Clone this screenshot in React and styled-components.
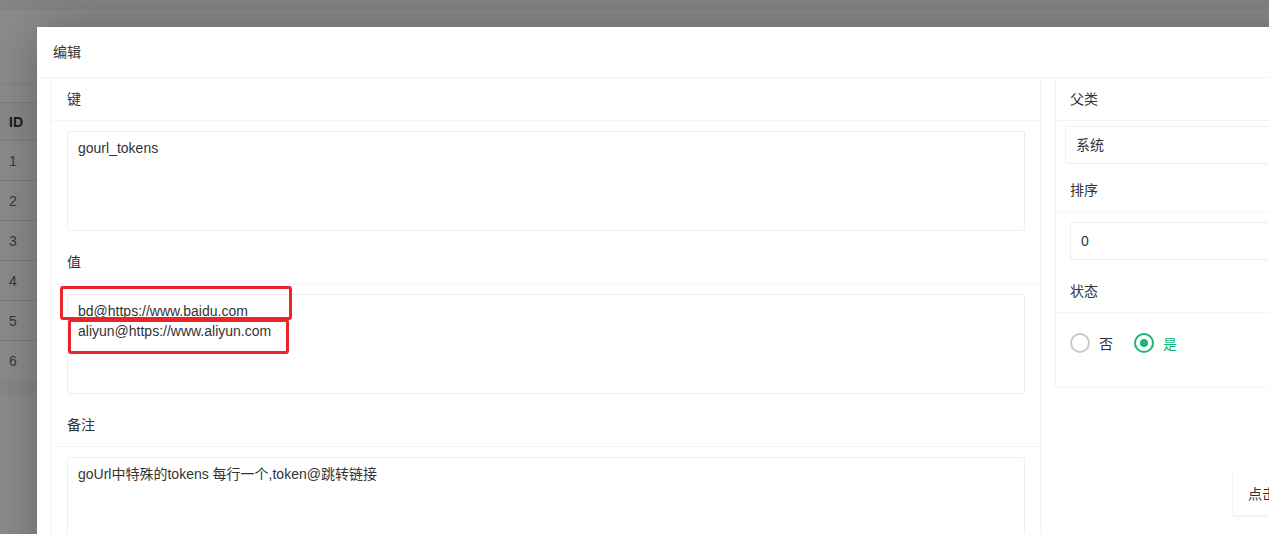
import styled, { createGlobalStyle } from 'styled-components'

const GlobalStyle = createGlobalStyle`
  html, body {
    margin: 0;
    padding: 0;
    overflow: hidden;
  }
  body {
    font-family: "Liberation Sans", "Noto Sans CJK SC", sans-serif;
    font-size: 14px;
    color: #333;
    background: #fff;
  }
`;

const Page = styled.div`
  position: relative;
  width: 1269px;
  height: 534px;
  overflow: hidden;
  background: #fff;
`;

const TopStrip = styled.div`
  height: 10px;
  background: #f2f2f2;
`;

const Toolbar = styled.div`
  height: 74px;
  border-bottom: 1px solid #eee;
`;

const Table = styled.table`
  margin-top: 17px;
  width: 100%;
  border-collapse: collapse;
  border-bottom: 15px solid #f8f8f8;
`;

const Th = styled.th`
  height: 37px;
  padding: 0 9px;
  text-align: left;
  font-weight: bold;
  color: #333;
  background: #fafafa;
  border-top: 1px solid #e6e6e6;
  border-bottom: 1px solid #e6e6e6;
`;

const Td = styled.td`
  height: 39px;
  padding: 0 9px;
  color: #666;
  border-bottom: 1px solid #e6e6e6;
`;

const Shade = styled.div`
  position: absolute;
  inset: 0;
  background: rgba(0, 0, 0, 0.45);
`;

const Modal = styled.div`
  position: absolute;
  left: 37px;
  top: 27px;
  width: 1400px;
  height: 620px;
  background: #fff;
  box-shadow: 1px 1px 50px rgba(0, 0, 0, 0.3);
`;

const ModalHeader = styled.div`
  height: 50px;
  line-height: 50px;
  padding: 0 16px;
  border-bottom: 1px solid #f0f0f0;
  color: #333;
`;

const ModalBody = styled.div`
  display: grid;
  grid-template-columns: 990px 1fr;
  gap: 14px;
  padding: 0 14px;
  align-items: start;
`;

const Column = styled.div`
  display: flex;
  flex-direction: column;
`;

const Card = styled.div`
  background: #fff;
  border-left: 1px solid #f3f3f3;
  border-right: 1px solid #f3f3f3;
  box-shadow: 0 1px 2px rgba(0, 0, 0, 0.05);
`;

const TipCard = styled(Card)`
  margin-top: 87px;
  margin-left: 177px;
  white-space: nowrap;
`;

const CardHeader = styled.div`
  height: 42px;
  line-height: 42px;
  padding: 0 ${p => p.$pad || 15}px;
  border-bottom: 1px solid #f4f4f4;
  color: #333;
`;

const CardBody = styled.div`
  padding: ${p => p.$pad || '10px 15px'};
`;

const Annotated = styled.div`
  position: relative;
`;

const TextArea = styled.textarea`
  display: block;
  width: 100%;
  height: 100px;
  box-sizing: border-box;
  padding: 6px 10px;
  border: 1px solid #eee;
  border-radius: 2px;
  font: inherit;
  line-height: 20px;
  color: #333;
  resize: none;
  outline: none;
  background: #fff;
`;

const Input = styled.div`
  height: 38px;
  line-height: 36px;
  box-sizing: border-box;
  padding: 0 10px;
  border: 1px solid #eee;
  border-radius: 2px;
  color: #333;
`;

const RedMark = styled.div`
  position: absolute;
  box-sizing: border-box;
  border: 3px solid #e8262a;
  border-radius: 3px;
  pointer-events: none;
`;

const RadioGroup = styled.div`
  display: flex;
  align-items: center;
  height: 28px;
  margin-top: 6px;
`;

const Radio = styled.label`
  display: flex;
  align-items: center;
  gap: 9px;
  margin-right: 21px;
  color: ${p => (p.$checked ? '#16b777' : '#333')};
`;

const RadioIcon = styled.span`
  position: relative;
  width: 20px;
  height: 20px;
  box-sizing: border-box;
  border-radius: 50%;
  border: 2px solid ${p => (p.$checked ? '#16b777' : '#c9c9c9')};
  &::after {
    content: '';
    display: ${p => (p.$checked ? 'block' : 'none')};
    position: absolute;
    left: 4px;
    top: 4px;
    width: 8px;
    height: 8px;
    border-radius: 50%;
    background: #16b777;
  }
`;

const rows = [1, 2, 3, 4, 5, 6];

export default function App() {
  return (
    <Page>
      <GlobalStyle />
      <TopStrip />
      <Toolbar />
      <Table>
        <thead>
          <tr><Th>ID</Th></tr>
        </thead>
        <tbody>
          {rows.map(r => (
            <tr key={r}><Td>{r}</Td></tr>
          ))}
        </tbody>
      </Table>
      <Shade />
      <Modal>
        <ModalHeader>编辑</ModalHeader>
        <ModalBody>
          <Card>
            <CardHeader>键</CardHeader>
            <CardBody>
              <TextArea readOnly defaultValue="gourl_tokens" />
            </CardBody>
            <CardHeader>值</CardHeader>
            <CardBody>
              <Annotated>
                <TextArea
                  readOnly
                  defaultValue={'bd@https://www.baidu.com\naliyun@https://www.aliyun.com'}
                />
                <RedMark style={{ left: -7, top: -8, width: 232, height: 34 }} />
                <RedMark style={{ left: 1, top: 25, width: 221, height: 35 }} />
              </Annotated>
            </CardBody>
            <CardHeader>备注</CardHeader>
            <CardBody>
              <TextArea readOnly defaultValue="goUrl中特殊的tokens 每行一个,token@跳转链接" />
            </CardBody>
          </Card>
          <Column>
            <Card>
              <CardHeader $pad={14}>父类</CardHeader>
              <CardBody $pad="5px 9px 5px">
                <Input>系统</Input>
              </CardBody>
              <CardHeader $pad={14}>排序</CardHeader>
              <CardBody $pad="10px 14px">
                <Input>0</Input>
              </CardBody>
              <CardHeader $pad={14}>状态</CardHeader>
              <CardBody $pad="10px 14px 29px">
                <RadioGroup>
                  <Radio>
                    <RadioIcon />
                    否
                  </Radio>
                  <Radio $checked>
                    <RadioIcon $checked />
                    是
                  </Radio>
                </RadioGroup>
              </CardBody>
            </Card>
            <TipCard>
              <CardHeader>点击查看帮助说明</CardHeader>
            </TipCard>
          </Column>
        </ModalBody>
      </Modal>
    </Page>
  );
}
